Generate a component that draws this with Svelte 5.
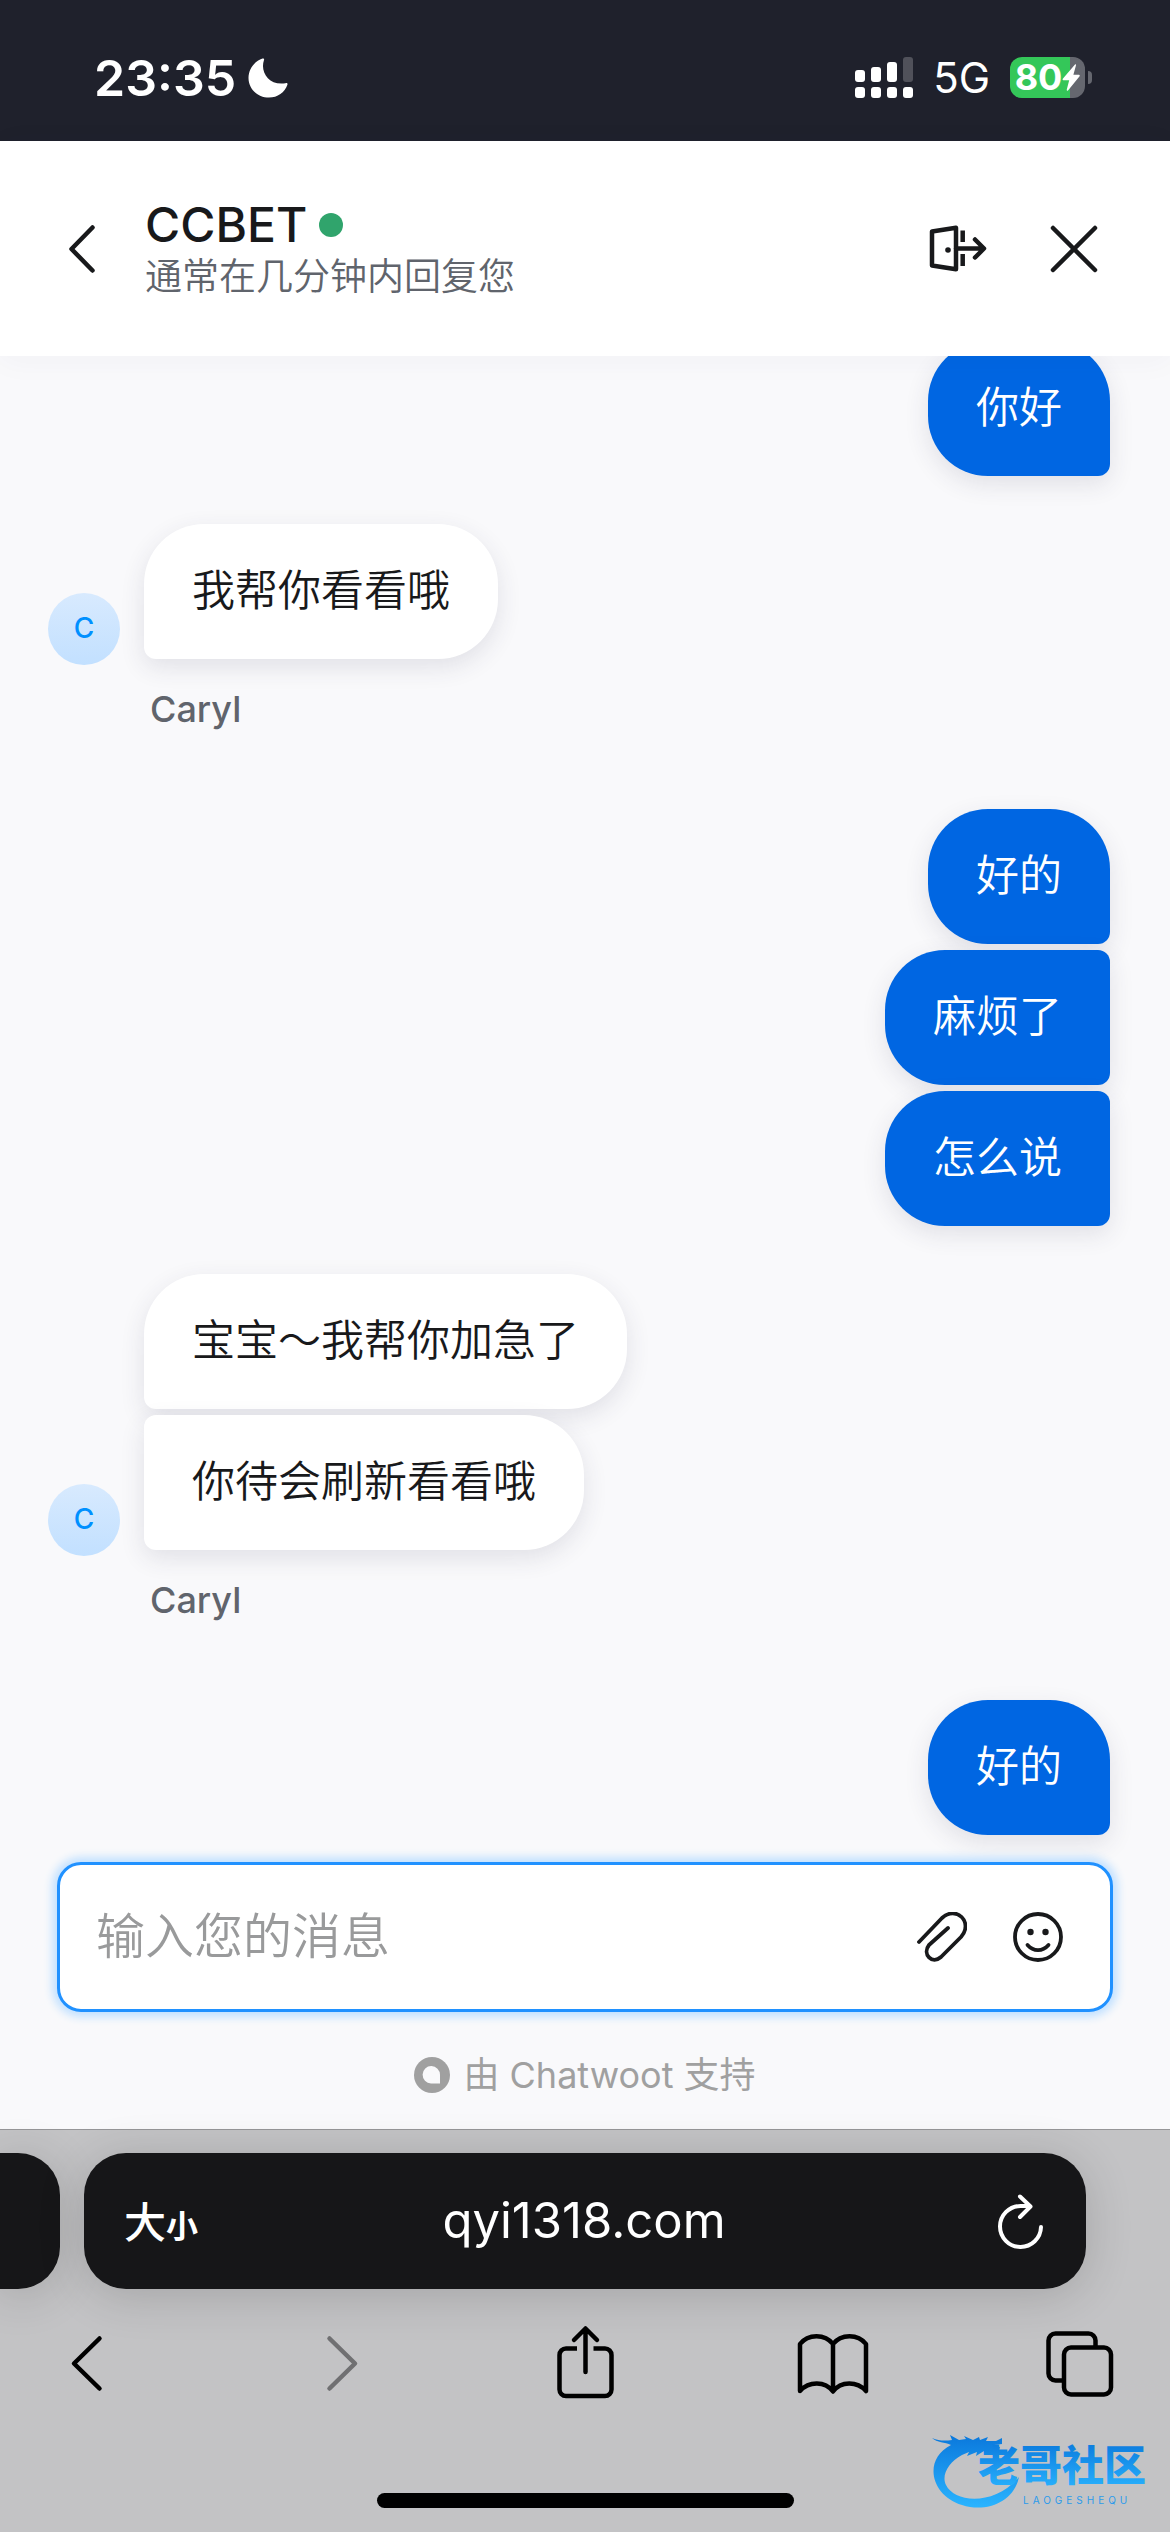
<script lang="ts">
  // Support chat widget, shown inside a mobile browser.
  interface Group {
    from: 'user' | 'agent';
    name?: string;
    messages: string[];
  }

  const groups: Group[] = [
    { from: 'user', messages: ['你好'] },
    { from: 'agent', name: 'Caryl', messages: ['我帮你看看哦'] },
    { from: 'user', messages: ['好的', '麻烦了', '怎么说'] },
    {
      from: 'agent',
      name: 'Caryl',
      messages: ['宝宝～我帮你加急了', '你待会刷新看看哦'],
    },
    { from: 'user', messages: ['好的'] },
  ];

  let draft = $state('');
</script>

<div class="screen">
  <div class="status-bar">
    <div class="clock">
      <span class="time">23:35</span>
      <svg width="40" height="40" viewBox="0 0 40 40" aria-hidden="true">
        <path
          d="M14.500.6C15.800.1 16.500.8 16 2c-4.200 12 5 26 21.500 23.200 1.500-.4 2.300.2 1.900 1.500C36.800 34.500 29.500 39.500 21 39.500 9.500 39.500.5 31 .5 20 .5 11 6 3.500 14.500.6z"
          fill="#fff"
        />
      </svg>
    </div>
    <div class="indicators">
      <svg width="58" height="42" viewBox="0 0 58 42" aria-hidden="true">
        <g fill="#fff">
          <rect x="0" y="13" width="10" height="12" rx="3" />
          <rect x="16" y="10" width="10" height="15" rx="3" />
          <rect x="32" y="5" width="10" height="20" rx="3" />
          <rect x="48" y="0" width="10" height="25" rx="3" opacity=".22" />
          <rect x="0" y="30" width="10" height="11" rx="3" />
          <rect x="16" y="30" width="10" height="11" rx="3" />
          <rect x="32" y="30" width="10" height="11" rx="3" />
          <rect x="48" y="30" width="10" height="11" rx="3" />
        </g>
      </svg>
      <span class="network">5G</span>
      <div class="battery">
        <div class="cell">
          <span>80</span>
          <svg width="18" height="27" viewBox="0 0 18 27" aria-hidden="true">
            <path
              d="M13 .4 1 14.500c-.8 1-.4 1.700.8 1.700h5.400L4.800 25.500c-.3 1.200.6 1.700 1.400.7L17.400 12.500c.7-.9.3-1.700-.8-1.700h-5.200L14 1.300c.2-1-.4-1.500-1-.9z"
              fill="#fff"
            />
          </svg>
        </div>
        <div class="nub"></div>
      </div>
    </div>
  </div>

  <header class="chat-header">
    <button class="icon-button" aria-label="返回">
      <svg width="26" height="48" viewBox="0 0 26 48">
        <path d="M23.500 2.500 2.500 24l21 21.500" class="line" />
      </svg>
    </button>
    <div class="titles">
      <h1>CCBET <span class="online"></span></h1>
      <p>通常在几分钟内回复您</p>
    </div>
    <button class="icon-button" aria-label="结束对话">
      <svg width="58" height="48" viewBox="0 0 58 48">
        <path d="M3 6.500 27 2.800v41.400L3 40.500z" class="line" />
        <path d="M33.700 5.500v11.500M33.700 29v12" class="line square" />
        <path d="M27 23.500h27M46 14.500l9 9-9 9" class="line" />
        <circle cx="19" cy="25" r="2.800" fill="#18191b" />
      </svg>
    </button>
    <button class="icon-button" aria-label="关闭">
      <svg width="48" height="48" viewBox="0 0 48 48">
        <path d="m3 3 42 42M45 3 3 45" class="line" />
      </svg>
    </button>
  </header>

  <main class="conversation">
    {#each groups as group}
      <section class="group {group.from}">
        {#if group.from === 'agent'}
          <div class="avatar">C</div>
        {/if}
        <div class="bubbles">
          {#each group.messages as message}
            <div class="bubble">{message}</div>
          {/each}
        </div>
        {#if group.name}
          <div class="name">{group.name}</div>
        {/if}
      </section>
    {/each}
  </main>

  <form class="composer" onsubmit={(e) => e.preventDefault()}>
    <textarea
      rows="1"
      aria-label="消息"
      placeholder="输入您的消息"
      bind:value={draft}
    ></textarea>
    <button type="button" class="icon-button" aria-label="附件">
      <svg width="50" height="50" viewBox="0 0 50 50">
        <path
          d="M2 30 25 6c14-13 32 4 19 19L24 45c-9 8-19-3-12-12L31 16"
          class="line thin"
        />
      </svg>
    </button>
    <button type="button" class="icon-button" aria-label="表情">
      <svg width="50" height="50" viewBox="0 0 50 50">
        <circle cx="25" cy="25" r="23" class="line thin" />
        <circle cx="17.500" cy="20" r="3.200" fill="#18191b" />
        <circle cx="32.500" cy="20" r="3.200" fill="#18191b" />
        <path d="M14.500 33c6 6.800 15 6.800 21 0" class="line thin" />
      </svg>
    </button>
  </form>

  <a class="branding" href="#chatwoot">
    <svg width="36" height="36" viewBox="0 0 36 36" aria-hidden="true">
      <circle cx="18" cy="18" r="18" fill="#a0a0a0" />
      <path d="M26 26.500h-9A8.700 8.700 0 1 1 26 17.800z" fill="#f9f9fb" />
    </svg>
    <span>由 Chatwoot 支持</span>
  </a>

  <footer class="browser">
    <div class="tabs">
      <div class="previous-tab"></div>
      <div class="address">
        <button class="text-size" aria-label="文字大小">大<small>小</small></button>
        <span class="url">qyi1318.com</span>
        <button class="icon-button" aria-label="重新载入">
          <svg width="46" height="56" viewBox="0 0 46 56">
            <path
              d="M43 34A20.500 20.500 0 1 1 22.500 13h8M22 3.500l10.500 10L22 24"
              class="line reload"
            />
          </svg>
        </button>
      </div>
    </div>
    <nav class="toolbar">
      <button class="icon-button" aria-label="后退">
        <svg width="84" height="84" viewBox="0 0 84 84">
          <path d="M57.500 17.500 32 42.500l25.500 25" class="line tool" />
        </svg>
      </button>
      <button class="icon-button" aria-label="前进" disabled>
        <svg width="84" height="84" viewBox="0 0 84 84">
          <path d="M36.500 17.500 62 42.500l-25.500 25" class="line tool muted" />
        </svg>
      </button>
      <button class="icon-button" aria-label="共享">
        <svg width="84" height="84" viewBox="0 0 84 84">
          <path
            d="M34 27.500H23a6.500 6.500 0 0 0-6.500 6.500v34.500A6.500 6.500 0 0 0 23 75h39a6.500 6.500 0 0 0 6.500-6.500V34a6.500 6.500 0 0 0-6.500-6.500H50.500"
            class="line tool square"
          />
          <path d="M42.500 51V8M31 19 42.500 7.500 54 19" class="line tool" />
        </svg>
      </button>
      <button class="icon-button" aria-label="书签">
        <svg width="84" height="84" viewBox="0 0 84 84">
          <path
            d="M39 23C31 12.500 14 12.500 6 23v47c9-10 25-10 33 .5C47 60 63 60 72 70V23c-8-10.500-25-10.500-33 0zv47"
            class="line tool"
          />
        </svg>
      </button>
      <button class="icon-button" aria-label="标签页">
        <svg width="84" height="84" viewBox="0 0 84 84">
          <path
            d="M20 59.500h-8.500a7 7 0 0 1-7-7v-33a7 7 0 0 1 7-7h33a7 7 0 0 1 7 7V27"
            class="line tool square"
          />
          <rect x="20" y="26.500" width="47" height="47" rx="7" class="line tool" />
        </svg>
      </button>
    </nav>
    <div class="home-indicator"></div>

    <svg class="watermark" width="222" height="76" viewBox="0 0 222 76">
      <defs>
        <linearGradient id="wave" x1="0" y1="0" x2="0" y2="1">
          <stop offset="0" stop-color="#0a78dc" />
          <stop offset="1" stop-color="#2ab4ff" />
        </linearGradient>
      </defs>
      <path
        fill="url(#wave)"
        d="M0 4c7 3 13 3 20 2l-2-5 9 5 7-1-2-3 9 4 6-3 1 3 8-3-2 4 10 0 6-3v6l-8 1 6 2-1 4-9-1-5 4-1-3-8 5 1-4-10 4 2-4-7 3C17 28 9 41 14 51c8 17 47 22 73-8-5 25-33 36-57 28C-2 61-9 25 19 11 13 8 5 9 0 4z"
      />
      <text x="46" y="47" class="mark" fill="url(#wave)">老哥社区</text>
      <text x="91" y="70" class="latin" fill="#2b9bec">LAOGESHEQU</text>
    </svg>
  </footer>
</div>

<style>
  :global(body) {
    margin: 0;
  }

  .screen {
    display: flex;
    flex-direction: column;
    height: 100vh;
    overflow: hidden;
    background: #f9f9fb;
    color: #18191b;
    font-family: Inter, 'Noto Sans CJK SC', sans-serif;
  }

  button {
    padding: 0;
    border: 0;
    background: none;
    color: inherit;
    font: inherit;
  }

  svg {
    display: block;
    flex: none;
  }

  .line {
    fill: none;
    stroke: #18191b;
    stroke-width: 4.5;
    stroke-linecap: round;
    stroke-linejoin: round;
  }

  .line.thin {
    stroke-width: 3.8;
  }

  .line.tool {
    stroke: #000;
    stroke-width: 4.5;
  }

  .line.muted {
    stroke: #707072;
  }

  .line.square {
    stroke-linecap: butt;
  }

  .line.reload {
    stroke: #fff;
    stroke-width: 4;
  }

  /* Status bar */
  .status-bar {
    display: flex;
    flex: none;
    align-items: center;
    justify-content: space-between;
    box-sizing: border-box;
    height: 141px;
    padding: 14px 78px 0 94px;
    background: #1f212c;
    color: #fff;
  }

  .clock,
  .indicators,
  .battery {
    display: flex;
    align-items: center;
  }

  .clock {
    gap: 12px;
  }

  .time {
    font-size: 50px;
    font-weight: 600;
    line-height: 60px;
  }

  .network {
    margin: 0 20px;
    font-size: 42px;
    line-height: 60px;
  }

  .battery {
    gap: 3px;
  }

  .cell {
    display: flex;
    align-items: center;
    justify-content: center;
    width: 75px;
    height: 41px;
    border-radius: 12px;
    background: linear-gradient(90deg, #34c759 80%, #65676f 80%);
    font-size: 36px;
    font-weight: 700;
    line-height: 41px;
  }

  .nub {
    width: 4px;
    height: 13px;
    border-radius: 0 6px 6px 0;
    background: #65676f;
  }

  /* Chat header */
  .chat-header {
    display: flex;
    flex: none;
    align-items: center;
    box-sizing: border-box;
    height: 215px;
    padding: 0 72px 0 69px;
    background: #fff;
    box-shadow: 0 4px 30px rgba(50, 50, 93, 0.04);
    z-index: 1;
  }

  .titles {
    flex: 1;
    margin-left: 50px;
  }

  h1 {
    display: flex;
    align-items: center;
    gap: 12px;
    margin: 0;
    font-size: 48px;
    font-weight: 500;
    line-height: 56px;
  }

  .online {
    width: 24px;
    height: 24px;
    border-radius: 50%;
    background: #30a46c;
  }

  .titles p {
    margin: 0;
    color: #60646c;
    font-size: 37px;
    font-weight: 350;
    line-height: 48px;
  }

  .chat-header .icon-button + .icon-button {
    margin-left: 63px;
  }

  /* Messages stick to the bottom and slide under the header */
  .conversation {
    display: flex;
    flex: 1;
    flex-direction: column;
    justify-content: flex-end;
    min-height: 0;
    padding: 0 60px 21px 48px;
  }

  .group {
    flex: none;
  }

  .bubbles {
    display: flex;
    flex-direction: column;
    align-items: flex-start;
  }

  .user .bubbles {
    align-items: flex-end;
  }

  .user:not(:last-child) {
    margin-bottom: 42px;
  }

  .agent {
    display: grid;
    grid-template-columns: 72px 1fr;
    column-gap: 24px;
    margin-bottom: 76px;
  }

  .bubble {
    margin-bottom: 6px;
    padding: 34px 48px 37px;
    border-radius: 12px 60px 60px 12px;
    background: #fff;
    box-shadow: 0 8px 24px rgba(50, 47, 83, 0.12);
    font-size: 43px;
    font-weight: 350;
    line-height: 64px;
  }

  .bubble:first-child {
    border-top-left-radius: 60px;
  }

  .user .bubble {
    border-radius: 60px 12px 12px 60px;
    background: #0066e2;
    color: #fff;
  }

  .user .bubble:first-child {
    border-top-right-radius: 60px;
  }

  .avatar {
    align-self: end;
    height: 72px;
    border-radius: 50%;
    background: linear-gradient(#d8eafe, #c2e0ff);
    color: #0090ff;
    font-size: 28px;
    font-weight: 500;
    line-height: 70px;
    text-align: center;
  }

  .name {
    grid-column: 2;
    margin-top: 20px;
    padding-left: 6px;
    color: #60646c;
    font-size: 36px;
    font-weight: 500;
    line-height: 48px;
  }

  /* Composer */
  .composer {
    display: flex;
    flex: none;
    align-items: center;
    gap: 46px;
    box-sizing: border-box;
    height: 150px;
    margin: 0 57px;
    padding: 0 47px 0 36px;
    border: 3px solid #2091ff;
    border-radius: 24px;
    background: #fff;
    box-shadow: 0 0 9px 5px #c2e1ff;
    z-index: 1;
  }

  textarea {
    flex: 1;
    min-width: 0;
    height: 72px;
    padding: 0;
    border: 0;
    outline: 0;
    background: none;
    color: inherit;
    font-family: inherit;
    font-size: 49px;
    font-weight: 350;
    line-height: 72px;
    resize: none;
    overflow: hidden;
  }

  textarea::placeholder {
    color: #999a9b;
    opacity: 1;
  }

  .branding {
    display: flex;
    flex: none;
    align-items: center;
    justify-content: center;
    gap: 13px;
    padding: 41px 0 32px;
    color: #a0a0a0;
    font-size: 36px;
    line-height: 44px;
    text-decoration: none;
  }

  /* Browser chrome */
  .browser {
    position: relative;
    flex: none;
    padding: 23px 0 24px;
    border-top: 1px solid #969698;
    background: #c3c3c5;
  }

  .tabs {
    display: flex;
    gap: 24px;
    height: 136px;
    padding-right: 84px;
  }

  .previous-tab,
  .address {
    border-radius: 42px;
    background: #161618;
    box-shadow: 0 6px 48px rgba(0, 0, 0, 0.16);
  }

  .previous-tab {
    width: 60px;
    border-top-left-radius: 0;
    border-bottom-left-radius: 0;
  }

  .address {
    display: grid;
    flex: 1;
    grid-template-columns: 1fr auto 1fr;
    align-items: center;
    padding: 0 42px 0 40px;
    color: #fff;
  }

  .address .icon-button {
    justify-self: end;
  }

  .text-size {
    justify-self: start;
    padding-top: 8px;
    font-size: 42px;
    font-weight: 500;
    line-height: 60px;
  }

  .text-size small {
    font-size: 32px;
    font-weight: 700;
  }

  .url {
    font-size: 49px;
    line-height: 60px;
  }

  .toolbar {
    display: flex;
    justify-content: space-between;
    padding: 32px 42px 88px;
  }

  .home-indicator {
    width: 417px;
    height: 15px;
    margin: 0 auto;
    border-radius: 8px;
    background: #000;
  }

  .watermark {
    position: absolute;
    right: 16px;
    bottom: 22px;
  }

  .mark {
    font-size: 42px;
    font-weight: 900;
  }

  .latin {
    font-size: 10px;
    letter-spacing: 4px;
  }
</style>
